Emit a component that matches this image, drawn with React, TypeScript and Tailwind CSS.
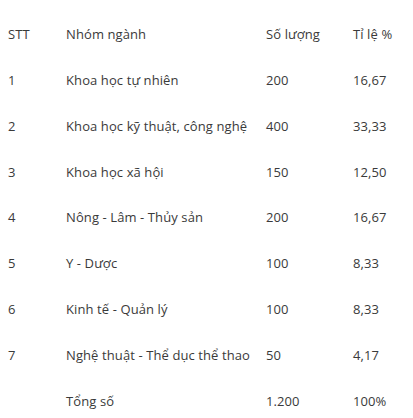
const rows = [
  ["STT", "Nhóm ngành", "Số lượng", "Tỉ lệ %"],
  ["1", "Khoa học tự nhiên", "200", "16,67"],
  ["2", "Khoa học kỹ thuật, công nghệ", "400", "33,33"],
  ["3", "Khoa học xã hội", "150", "12,50"],
  ["4", "Nông - Lâm - Thủy sản", "200", "16,67"],
  ["5", "Y - Dược", "100", "8,33"],
  ["6", "Kinh tế - Quản lý", "100", "8,33"],
  ["7", "Nghệ thuật - Thể dục thể thao", "50", "4,17"],
  ["", "Tổng số", "1.200", "100%"],
];

export default function App() {
  return (
    <div className="w-[413px] h-[418px] overflow-hidden bg-white pt-[12px] text-[#3a3a3a] text-[13px] tracking-[0.1px] font-['Open_Sans',sans-serif]">
      {rows.map((r, i) => (
        <div key={i} className="grid grid-cols-[58px_200px_87px_1fr] h-[45.8px] items-center pl-[8px]">
          <span>{r[0]}</span>
          <span className="whitespace-nowrap">{r[1]}</span>
          <span>{r[2]}</span>
          <span>{r[3]}</span>
        </div>
      ))}
    </div>
  );
}
